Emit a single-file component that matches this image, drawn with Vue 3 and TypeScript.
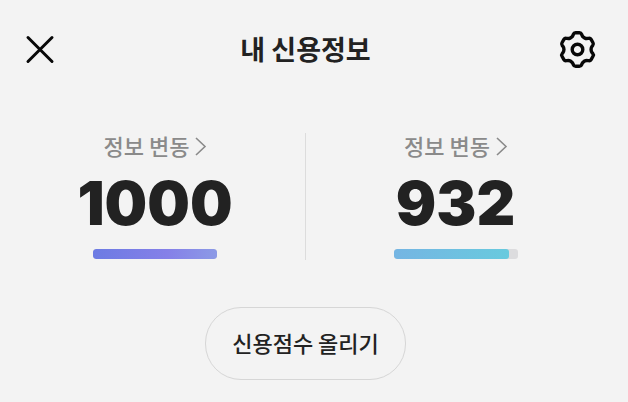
<script setup lang="ts">
interface Score {
  id: string
  value: number
  max: number
}

const scores: Score[] = [
  { id: 'violet', value: 1000, max: 1000 },
  { id: 'sky', value: 932, max: 1000 },
]

type Point = [number, number]

// Outline of a six-toothed gear centred on the origin, with softened corners.
function gearPath(): string {
  const tooth: Point[] = [[-5, -12.8], [-3.6, -16.8], [3.6, -16.8], [5, -12.8]]
  const points: Point[] = []
  for (let i = 0; i < 6; i++) {
    const a = (i * Math.PI) / 3
    for (const [x, y] of tooth) {
      points.push([x * Math.cos(a) - y * Math.sin(a), x * Math.sin(a) + y * Math.cos(a)])
    }
  }
  const toward = (from: Point, to: Point): string => {
    const d = Math.hypot(to[0] - from[0], to[1] - from[1])
    const t = Math.min(1.7 / d, 0.5)
    return `${(from[0] + (to[0] - from[0]) * t).toFixed(2)} ${(from[1] + (to[1] - from[1]) * t).toFixed(2)}`
  }
  const n = points.length
  return points
    .map((p, i) => {
      const start = toward(p, points[(i + n - 1) % n])
      const end = toward(p, points[(i + 1) % n])
      return `${i ? 'L' : 'M'}${start}Q${p[0].toFixed(2)} ${p[1].toFixed(2)} ${end}`
    })
    .join('') + 'Z'
}

const gear = gearPath()
</script>

<template>
  <main class="page">
    <header class="header">
      <button class="icon-button" type="button" aria-label="닫기">
        <svg width="40" height="40" viewBox="-20 -20 40 40" fill="none" stroke="#080808" stroke-width="3" stroke-linecap="round">
          <path d="M-12 -12.500L12 11.500M12 -12.500L-12 11.500" />
        </svg>
      </button>
      <h1 class="title">내 신용정보</h1>
      <button class="icon-button" type="button" aria-label="설정">
        <svg width="40" height="40" viewBox="-20.5 -19.5 40 40" fill="none" stroke="#080808" stroke-width="3.4" stroke-linejoin="round">
          <path :d="gear" />
          <circle r="5.3" />
        </svg>
      </button>
    </header>

    <section class="scores">
      <article v-for="s in scores" :key="s.id" class="score">
        <a class="link" href="#">
          <span>정보 변동</span>
          <svg width="11" height="20" viewBox="0 0 11 20" fill="none" stroke="#8a8a8a" stroke-width="1.6">
            <path d="M1 3L10 11.500L1 20" />
          </svg>
        </a>
        <strong class="value">{{ s.value }}</strong>
        <div class="track">
          <div class="fill" :class="s.id" :style="{ width: (s.value / s.max) * 100 + '%' }"></div>
        </div>
      </article>
    </section>

    <button class="raise" type="button">신용점수 올리기</button>
  </main>
</template>

<style>
body {
  margin: 0;
  background: #f3f3f3;
}
</style>

<style scoped>
.page {
  display: flex;
  flex-direction: column;
  align-items: center;
  padding: 28px 17px 22px 0;
  color: #222;
  font-family: "Noto Sans CJK KR", sans-serif;
}
.header {
  box-sizing: border-box;
  width: 100%;
  display: flex;
  align-items: center;
  justify-content: space-between;
  padding: 0 14px 0 20px;
}
.icon-button {
  padding: 0;
  border: 0;
  background: none;
  line-height: 0;
}
.icon-button svg {
  display: block;
}
.title {
  margin: 0;
  padding: 0 6px 2px 0;
  font-size: 27px;
  font-weight: 700;
  line-height: 42px;
}
.scores {
  box-sizing: border-box;
  width: 100%;
  display: grid;
  grid-template-columns: 1fr 1fr;
  margin-top: 61px;
  padding: 0 6px 0 5px;
}
.score {
  display: flex;
  flex-direction: column;
  align-items: center;
}
.score + .score {
  border-left: 1px solid #dcdcdc;
}
.link {
  display: flex;
  align-items: center;
  gap: 6px;
  color: #8a8a8a;
  font-size: 22px;
  font-weight: 500;
  line-height: 24px;
  text-decoration: none;
}
.link svg {
  overflow: visible;
}
.value {
  margin-top: 16px;
  font-family: Inter, sans-serif;
  font-size: 60px;
  font-variation-settings: "opsz" 14;
  font-weight: 900;
  line-height: 60px;
}
.track {
  width: 124px;
  height: 10px;
  margin: 16px 0 1px;
  border-radius: 3px;
  background: #dcdcde;
  overflow: hidden;
}
.fill {
  height: 100%;
  border-radius: 3px;
}
.violet {
  background: linear-gradient(90deg, #6c7be3, #8580e8 60%, #8c9ae6);
}
.sky {
  background: linear-gradient(90deg, #75b5e3, #68cade);
}
.raise {
  margin-top: 47px;
  padding: 13px 26px 16px;
  border: 1px solid #d6d6d6;
  border-radius: 36px;
  background: none;
  color: #222;
  font-family: inherit;
  font-size: 22px;
  font-weight: 500;
  line-height: 42px;
}
</style>
